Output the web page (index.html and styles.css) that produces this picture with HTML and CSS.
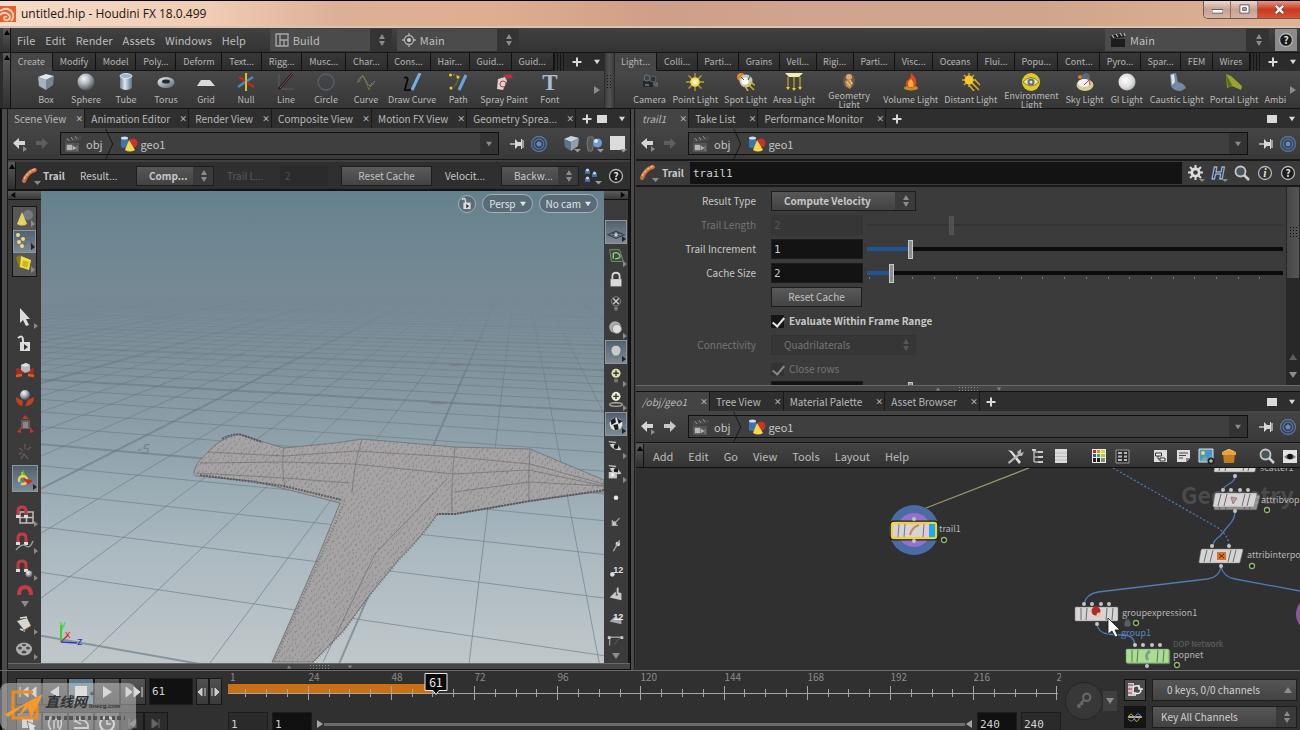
FILE: index.html
```html
<!DOCTYPE html>
<html lang="en">
  <head>
    <meta charset="UTF-8" />
    <meta name="viewport" content="width=device-width, initial-scale=1.0" />
    <title>untitled.hip - Houdini FX 18.0.499</title>
    <link rel="stylesheet" href="styles.css">
  </head>
  <body>
    <!-- icon sprite -->
    <svg class="sprite" aria-hidden="true">
      <defs>
        <linearGradient id="steel" x1="0" y1="0" x2="1" y2="1">
          <stop offset="0" stop-color="#eef3f6" /><stop offset="1" stop-color="#56646e" />
        </linearGradient>
        <linearGradient id="steelH"><stop offset="0" stop-color="#6f8496" /><stop offset=".4" stop-color="#dfe8ef" /><stop offset="1" stop-color="#5d6f7e" /></linearGradient>
        <radialGradient id="ball" cx=".38" cy=".3" r=".7">
          <stop offset="0" stop-color="#f4f6f8" /><stop offset=".5" stop-color="#a9b1b8" /><stop offset="1" stop-color="#4c5359" />
        </radialGradient>
        <radialGradient id="pearl" cx=".4" cy=".4" r=".65">
          <stop offset="0" stop-color="#ffffff" /><stop offset=".6" stop-color="#e3dde2" /><stop offset="1" stop-color="#a9b9a8" />
        </radialGradient>
        <radialGradient id="glow">
          <stop offset="0" stop-color="#fffde0" /><stop offset="1" stop-color="#e8d040" />
        </radialGradient>
      </defs>
      <symbol id="i-box" viewBox="0 0 18 18"><path d="M1 4l8-3 8 2-8 4z" fill="#dfe7ec" /><path d="M1 4l8 3v10l-7-4z" fill="#a5b3bd" /><path d="M9 7l8-4-1 9-7 5z" fill="#77858f" /></symbol>
      <symbol id="i-sphere" viewBox="0 0 18 18"><circle cx="9" cy="9" r="8.5" fill="url(#ball)" /></symbol>
      <symbol id="i-tube" viewBox="0 0 18 18"><path d="M3 3v12q6 4 12 0V3z" fill="url(#steelH)" /><ellipse cx="9" cy="3" rx="6" ry="2.4" fill="#9db2c3" stroke="#dbe5ec" /></symbol>
      <symbol id="i-torus" viewBox="0 0 18 18"><ellipse cx="9" cy="9.500" rx="8.500" ry="5.500" fill="url(#steel)" /><ellipse cx="9" cy="8.500" rx="4" ry="2" fill="#252b33" /></symbol>
      <symbol id="i-grid" viewBox="0 0 18 18"><path d="M4 7h9l5 6H0z" fill="#d7dbde" /></symbol>
      <symbol id="i-null" viewBox="0 0 18 18"><path d="M9 0v18" stroke="#d8c320" stroke-width="2" /><path d="M1 14l7-5" stroke="#4a86c4" stroke-width="2.500" /><path d="M2 4l6 4M11 10l6 4" stroke="#c02a22" stroke-width="2.500" /><path d="M10 8l6-4" stroke="#4a86c4" stroke-width="2.500" /></symbol>
      <symbol id="i-line" viewBox="0 0 18 18"><path d="M2 1v15h15" stroke="#5c5c5c" fill="none" /><path d="M2 16L15 1" stroke="#151515" stroke-width="2.500" /><path d="M3 15L15 1" stroke="#b05058" /></symbol>
      <symbol id="i-circle" viewBox="0 0 18 18"><circle cx="9" cy="9" r="8" fill="none" stroke="#56606e" stroke-width="1.300" /></symbol>
      <symbol id="i-curve" viewBox="0 0 18 18"><path d="M0 10Q5-2 9 8t9 0" stroke="#77808a" fill="none" /><path d="M2 9l4-7 6 15 3-8" stroke="#907a38" stroke-dasharray="2 1" fill="none" /></symbol>
      <symbol id="i-draw" viewBox="0 0 18 18"><path d="M1 5q5-2 3 4t-2 8q3 1 6-1" stroke="#080808" stroke-width="1.800" fill="none" /><path d="M17 0L9 17" stroke="#77aee6" stroke-width="3" /></symbol>
      <symbol id="i-path" viewBox="0 0 18 18"><path d="M1 2q9-1 8 4t-5 9" stroke="#a98e2d" fill="none" stroke-dasharray="2 1" /><path d="M17 2L10 17" stroke="#6ca2dc" stroke-width="3" /><g fill="#e4d12c"><circle cx="1.500" cy="2" r="1.500" /><circle cx="9" cy="4" r="1.500" /><circle cx="2" cy="15" r="1.500" /></g></symbol>
      <symbol id="i-spray" viewBox="0 0 18 18"><path d="M3 6l7-2 2 4-4 9-6-1z" fill="#d9d5d2" /><path d="M8 2l8-1 2 4-6 1z" fill="#b8323a" /><circle cx="8" cy="11" r="3" fill="none" stroke="#bd3a3f" /></symbol>
      <symbol id="i-font" viewBox="0 0 18 18"><text x="9" y="17" text-anchor="middle" font-family="Liberation Serif, serif" font-weight="bold" font-size="23" fill="#a9bdd0">T</text></symbol>
      <symbol id="i-camera" viewBox="0 0 18 18"><path d="M2 8h10v6H2z" fill="#23282d" /><circle cx="6" cy="5" r="3" fill="#3b4349" stroke="#6b757d" /><circle cx="12" cy="6" r="3" fill="#2b3238" stroke="#59636b" /><path d="M12 10l5-1v5l-4-1z" fill="#5a656d" /><path d="M4 12h4" stroke="#9ba6ae" /></symbol>
      <symbol id="i-point" viewBox="0 0 18 18"><path d="M9 0v18M0 9h18M2.500 2.500l13 13M15.500 2.500l-13 13" stroke="#b9a423" stroke-width="1.300" /><circle cx="9" cy="9" r="4.800" fill="url(#glow)" /></symbol>
      <symbol id="i-spot" viewBox="0 0 18 18"><circle cx="4" cy="4" r="4" fill="#d98a2b" /><circle cx="9" cy="8" r="6.500" fill="#c9c9c4" /><circle cx="8" cy="8" r="3.500" fill="#fff" /><path d="M11 11l6 6M13 9l5 3M8 13l3 5" stroke="#c9b526" stroke-width="1.500" /><path d="M4 4l3 3M13 3l-2 4" stroke="#444" /></symbol>
      <symbol id="i-area" viewBox="0 0 18 18"><path d="M0 0h18l-4 4H4z" fill="#f3edb4" /><path d="M3 4v12M9 4v13M15 4v12" stroke="#b9a423" stroke-width="1.300" /><path d="M1 14h4l-2 3zM7 15h4l-2 3zM13 14h4l-2 3z" fill="#e3cf33" /></symbol>
      <symbol id="i-geolight" viewBox="0 0 18 18"><ellipse cx="9" cy="8" rx="6" ry="7.500" fill="#6a5a52" /><circle cx="9" cy="4" r="3" fill="#e0a468" /><path d="M5 8l5-2 3 4-3 6-4-3z" fill="#c9903a" /><path d="M7 9l3 4M10 7l2 4" stroke="#d9d5ec" /></symbol>
      <symbol id="i-fire" viewBox="0 0 18 18"><ellipse cx="9" cy="15" rx="7" ry="2.500" fill="#c78a28" /><path d="M9 0q7 6 5 12-2 3-5 3t-5-3Q3 8 7 6q2-2 2-6z" fill="#dc4a1c" /><path d="M9 6q4 4 2 8H7q-3-4 2-8z" fill="#f8b03a" /></symbol>
      <symbol id="i-distant" viewBox="0 0 18 18"><path d="M7 0v14M0 7h14M2 2l10 10M12 2L2 12" stroke="#e0a01c" stroke-width="1.500" /><circle cx="7" cy="7" r="4.500" fill="#f6c92a" /><path d="M10 10l7 7M13 7l5 5M7 12l5 6" stroke="#d8b11e" stroke-width="1.500" /></symbol>
      <symbol id="i-env" viewBox="0 0 18 18"><circle cx="9" cy="9" r="9" fill="#e2c928" /><path d="M1 9q8-9 16 0-8 8-16 0z" fill="#eee8a0" stroke="#8f7d18" /><circle cx="9" cy="9" r="3.500" fill="#5d6f7e" /><circle cx="9" cy="9" r="1.500" fill="#dfe5ea" /></symbol>
      <symbol id="i-sky" viewBox="0 0 18 18"><circle cx="4" cy="4" r="2" fill="#e07d28" /><circle cx="10" cy="4" r="4" fill="#58677a" /><ellipse cx="9" cy="12" rx="8.500" ry="6" fill="#d7cc94" /><ellipse cx="8" cy="10" rx="6" ry="4" fill="#eef0f2" /><path d="M8 12l5-5 1 5" stroke="#b14a35" fill="none" /></symbol>
      <symbol id="i-gi" viewBox="0 0 18 18"><circle cx="9" cy="9" r="8.500" fill="url(#pearl)" /></symbol>
      <symbol id="i-caustic" viewBox="0 0 18 18"><path d="M2 1l6-1 2 9q6 1 8 6l-5 3q-8 0-10-5z" fill="#7389a5" /><path d="M3 2l3-1 1 8-3 3z" fill="#dde6ef" /></symbol>
      <symbol id="i-portal" viewBox="0 0 18 18"><path d="M1 1l5 2 11 10-1 4-9-4-5 2z" fill="#98a42b" /><path d="M1 1l2 14 4-3z" fill="#5d6a20" /></symbol>

      <symbol id="i-back" viewBox="0 0 18 18"><path d="M2 8l6-5v3h6v4H8v4z" fill="#d5d5d5" /><path d="M12 11v6l4-3z" fill="#8a8a8a" /></symbol>
      <symbol id="i-next" viewBox="0 0 18 18"><path d="M15 8L9 3v3H3v4h6v4z" fill="currentColor" /></symbol>
      <symbol id="i-obj" viewBox="0 0 18 18"><path d="M0 4l16-3v4L0 8z" fill="#4a4a4a" /><path d="M2 3l2 3M6 2l2 3M10 1l2 3" stroke="#8f8f8f" /><path d="M0 8h14v9H0z" fill="#555" /><path d="M2 10h5v5H2zM8 11l3 2-3 2zM12 11v5" fill="#b5b5b5" stroke="#b5b5b5" stroke-width=".5" /></symbol>
      <symbol id="i-geo" viewBox="0 0 18 18"><path d="M1 3v9q3 2 7 0V3z" fill="#3e74ad" /><ellipse cx="4.500" cy="3" rx="3.500" ry="1.500" fill="#cfe0ee" /><circle cx="13" cy="8" r="4.500" fill="#c8322a" /><path d="M9 5l6 10q-5 3-10 0z" fill="#f1da45" /></symbol>
      <symbol id="i-pin" viewBox="0 0 18 18"><path d="M2 9h6" stroke="#ddd" stroke-width="1.300" /><path d="M7 4l3 3h3V4h1v10h-1v-3h-3l-3 3z" fill="#d8d8d8" /><path d="M15 5v8" stroke="#bbb" stroke-width="1.500" /></symbol>
      <symbol id="i-target" viewBox="0 0 18 18"><g fill="none" stroke="#5275a8" stroke-width="1.300"><circle cx="9" cy="9" r="7.500" /><circle cx="9" cy="9" r="4.800" /></g><circle cx="9" cy="9" r="2.500" fill="#5b8bd0" /></symbol>
      <symbol id="i-cube" viewBox="0 0 18 18"><path d="M1 4l7-3 8 2-8 4z" fill="#c8d4de" /><path d="M1 4l7 3v9l-6-4z" fill="#60738a" /><path d="M8 7l8-4-1 8-7 5z" fill="#8fa0af" /><path d="M11 14h7l-3.500 3.500z" fill="#9a9a9a" /></symbol>
      <symbol id="i-bulbs" viewBox="0 0 18 18"><path d="M2 2h5l1 6-2 8H2L1 8z" fill="#555" stroke="#777" /><circle cx="11.500" cy="8" r="4.500" fill="#6d9bd1" /><circle cx="10" cy="6" r="2" fill="#dbe8f5" /><path d="M11 14h7l-3.500 3.500z" fill="#9a9a9a" /></symbol>
      <symbol id="i-swatch" viewBox="0 0 18 18"><path d="M1 1h15v14H1z" fill="#dcdcdc" /><path d="M11 14h7l-3.500 3.500z" fill="#9a9a9a" /></symbol>
      <symbol id="i-trail" viewBox="0 0 20 20"><path d="M3 15Q6 6 14 4" stroke="#c9713a" stroke-width="4" fill="none" stroke-linecap="round" /><path d="M3 13Q7 6 14 3" stroke="#eeb88c" stroke-width="1.500" fill="none" stroke-dasharray="3 1" /><path d="M13 15h7l-3.500 4z" fill="#8a8a8a" /></symbol>
      <symbol id="i-updown" viewBox="0 0 8 14"><path d="M1 6l3-5 3 5zM1 8h6l-3 5z" fill="currentColor" /></symbol>
      <symbol id="i-down" viewBox="0 0 8 8"><path d="M0 1h8L4 7z" fill="currentColor" /></symbol>
      <symbol id="i-up" viewBox="0 0 8 8"><path d="M0 7h8L4 1z" fill="currentColor" /></symbol>
      <symbol id="i-right" viewBox="0 0 8 8"><path d="M1 0v8l6-4z" fill="currentColor" /></symbol>
      <symbol id="i-left" viewBox="0 0 8 8"><path d="M7 0v8L1 4z" fill="currentColor" /></symbol>
      <symbol id="i-plus" viewBox="0 0 10 10"><path d="M5 0.500v9M0.500 5h9" stroke="#d8d8d8" stroke-width="2" /></symbol>
      <symbol id="i-pane" viewBox="0 0 10 8"><path d="M0 0h10v8H0z" fill="#dadada" /></symbol>
      <symbol id="i-help" viewBox="0 0 18 18"><circle cx="9" cy="9" r="6.500" fill="#1b1b1b" stroke="#b5b5b5" stroke-width="1.300" /><text x="9" y="13" text-anchor="middle" font-family="Noto Sans CJK SC, sans-serif" font-weight="bold" font-size="10" fill="#e0e0e0">?</text></symbol>
      <symbol id="i-info" viewBox="0 0 18 18"><circle cx="9" cy="9" r="6.500" fill="#333" stroke="#b5b5b5" stroke-width="1.300" /><text x="9" y="13" text-anchor="middle" font-family="Liberation Serif, serif" font-weight="bold" font-style="italic" font-size="12" fill="#dcdcdc">i</text></symbol>
      <symbol id="i-gear" viewBox="0 0 18 18"><path d="M8.500 1v15M1 8.500h15M3 3l11 11M14 3L3 14" stroke="#dcdcdc" stroke-width="2" /><circle cx="8.500" cy="8.500" r="5" fill="#dcdcdc" /><circle cx="8.500" cy="8.500" r="2.300" fill="#3a3a3a" /><path d="M12 15h6l-3 3z" fill="#8a8a8a" /></symbol>
      <symbol id="i-hda" viewBox="0 0 18 18"><text x="8" y="15" text-anchor="middle" font-family="Liberation Sans, sans-serif" font-weight="bold" font-style="italic" font-size="17" fill="#132638" stroke="#b9cfe4">H</text><path d="M12 15h6l-3 3z" fill="#8a8a8a" /></symbol>
      <symbol id="i-search" viewBox="0 0 18 18"><circle cx="7.500" cy="7.500" r="5" fill="#49575c" stroke="#c6c6c6" stroke-width="1.800" /><path d="M11 11l5 5" stroke="#d0d0d0" stroke-width="2.500" /></symbol>
      <symbol id="i-people" viewBox="0 0 18 18"><g fill="#3f6ea8"><path d="M1 3h5v4H1zM8 6h5v4H8zM1 11h5v4H1z" /></g><g fill="#d6d6d6"><circle cx="3.500" cy="3" r="1.500" /><circle cx="10.500" cy="6" r="1.500" /><circle cx="3.500" cy="11" r="1.500" /></g><path d="M11 14h7l-3.500 3.500z" fill="#9a9a9a" /></symbol>
      <symbol id="i-layout" viewBox="0 0 14 14"><path d="M1 1h12v12H1zM5 1v12M5 7h8M9 7v6" fill="none" stroke="#a8a8a8" stroke-width="1.300" /></symbol>
      <symbol id="i-radial" viewBox="0 0 14 14"><circle cx="7" cy="7" r="4.500" fill="none" stroke="#b0b0b0" stroke-width="1.300" /><circle cx="7" cy="7" r="2" fill="#ccc" /><path d="M7 0v3M7 11v3M0 7h3M11 7h3" stroke="#b0b0b0" stroke-width="1.300" /></symbol>
      <symbol id="i-clap" viewBox="0 0 16 16"><path d="M1 7h14v8H1z" fill="#1d1d1d" /><path d="M0 4l15-3v4L1 7z" fill="#222" /><path d="M2 3l2 3M6 2l2 3M10 1l2 3M14 1l1 3" stroke="#b5b5b5" stroke-width="1.300" /></symbol>

      <symbol id="i-tools" viewBox="0 0 18 18"><path d="M2 3l4 1 9 11-2 2L5 6z" fill="#ddd" /><path d="M15 2l-4 3 1 2-10 8 1 2 10-8h3l2-4-3 1z" fill="#b5b5b5" /></symbol>
      <symbol id="i-tree" viewBox="0 0 18 18"><path d="M5 2v13M5 5h7M5 10h7M5 15h7" stroke="#b0b0b0" stroke-width="1.500" /><path d="M3 2h4v2H3zM9 4h5v2H9zM9 9h5v2H9zM9 14h5v2H9z" fill="#ccc" /></symbol>
      <symbol id="i-list" viewBox="0 0 18 18"><path d="M3 2h12v14H3z" fill="#dcdcdc" /><path d="M3 6h12M3 9.500h12M3 13h12" stroke="#bbb" /></symbol>
      <symbol id="i-palette" viewBox="0 0 18 18"><path d="M2 2h14v14H2z" fill="#ececec" /><path d="M3 3h3v3H3z" fill="#d02020" /><path d="M7 3h3v3H7z" fill="#e08a20" /><path d="M11 3h4v3h-4z" fill="#e8d620" /><path d="M3 7h3v3H3z" fill="#305aa8" /><path d="M7 7h3v3H7z" fill="#4ca840" /><path d="M11 7h4v3h-4z" fill="#a8c848" /><path d="M3 11h3v4H3zM7 11h3v4H7z" fill="#222" /><path d="M11 11h4v4h-4z" fill="#8a8a8a" /></symbol>
      <symbol id="i-cells" viewBox="0 0 18 18"><path d="M3 3h13v13H3z" fill="#2a2a2a" stroke="#9a9a9a" /><path d="M5 6h4M11 6h3M5 9.500h4M11 9.500h3M5 13h4M11 13h3" stroke="#b8b8b8" stroke-width="1.800" /></symbol>
      <symbol id="i-netbox" viewBox="0 0 18 18"><path d="M3 3h13v12H3z" fill="#dedede" /><path d="M4.500 6h6v3h-6zM9 11h5v3H9zM7 9v3h2" fill="#eee" stroke="#333" /></symbol>
      <symbol id="i-note" viewBox="0 0 18 18"><path d="M3 3h13v8l-4 4H3z" fill="#dedede" /><path d="M5 6h9M5 8.500h7M5 11h4" stroke="#444" /><path d="M12 15v-4h4z" fill="#8b8b8b" /></symbol>
      <symbol id="i-image" viewBox="0 0 18 18"><path d="M2 2h14v13H2z" fill="#4c92cc" stroke="#dce6ee" /><circle cx="6" cy="6" r="2" fill="#ecdf4a" /><path d="M3 14l5-5 3 3 3-4 2 6z" fill="#6fae9b" /><circle cx="14" cy="14" r="3.500" fill="#222" /><path d="M14 12v4M12 14h4" stroke="#ddd" /></symbol>
      <symbol id="i-gift" viewBox="0 0 18 18"><path d="M3 7h12l-1 9H4z" fill="#c07c22" /><path d="M2 5q7-5 14 0v3H2z" fill="#e8a03c" /><path d="M5 5q4-5 8 0" stroke="#f3c57a" fill="none" /></symbol>
      <symbol id="i-eye" viewBox="0 0 18 18"><path d="M2 3h14v13H2z" fill="#e2e2e2" /><path d="M3 10q6-6 12 0-6 5-12 0z" fill="#777" /><circle cx="9" cy="9.500" r="2.800" fill="#111" /></symbol>

      <symbol id="i-cone" viewBox="0 0 22 22"><circle cx="14" cy="7" r="5" fill="#747a7d" /><path d="M8 4l5 12q-5 3-10 0z" fill="#e3d660" /><path d="M17 12v7l4-3z" fill="#8b8b8b" /></symbol>
      <symbol id="i-points" viewBox="0 0 22 22"><path d="M4 4l8 2 5-2M5 11l4-2 8-1v7M8 15l5-3" stroke="#5c6670" fill="none" /><g fill="#ecd988"><circle cx="4" cy="4" r="2" /><circle cx="9" cy="8" r="2" /><circle cx="5" cy="11" r="2" /><circle cx="8" cy="15" r="2" /></g><path d="M17 12v7l4-3z" fill="#222" /></symbol>
      <symbol id="i-yellowbox" viewBox="0 0 22 22"><path d="M2 3l5-2 3 12-5 1z" fill="#8a7a1a" /><path d="M7 2l10 4-2 10-9-3z" fill="#f0e04e" /><path d="M9 6l6 2-2 6-5-2z" fill="#cdb913" /><path d="M17 12v7l4-3z" fill="#8b8b8b" /></symbol>
      <symbol id="i-arrow" viewBox="0 0 22 22"><path d="M6 2v15l3-3 3 6 3-1-3-6h4z" fill="#dcdcdc" /></symbol>
      <symbol id="i-unlock" viewBox="0 0 22 22"><path d="M4 5q5-4 5 3v2" stroke="#dcdcdc" stroke-width="2" fill="none" /><path d="M6 9h10v9H6z" fill="#dcdcdc" /><path d="M10 11v6l4-3z" fill="#333" /></symbol>
      <symbol id="i-move" viewBox="0 0 22 22"><path d="M2 8l7 1 1 3-7 6zM20 8l-7 1-1 3 7 6z" fill="#a52d1f" /><path d="M2 16l6-1M20 16l-6-1" stroke="#e0582c" stroke-width="2.500" /><path d="M7 5l5-2 4 2v6l-5 2-4-3z" fill="#b4bac0" /><path d="M7 5l5-2 4 2-5 2z" fill="#dde0e3" /></symbol>
      <symbol id="i-rotate" viewBox="0 0 22 22"><path d="M2 10q0 8 6 9l1-5zM20 10q0 9-9 9l3-6z" fill="#c8401f" /><circle cx="11" cy="8" r="5" fill="url(#ball)" /></symbol>
      <symbol id="i-scale" viewBox="0 0 22 22"><path d="M8 5l3-4 4 4zM3 18l4-5v6zM20 18l-4-5v6z" fill="#c8321f" /><path d="M7 6h9v9H7z" fill="#625c60" /><path d="M9 8h5v6H9z" fill="#8f8488" /></symbol>
      <symbol id="i-pose" viewBox="0 0 22 22"><path d="M11 3v5M5 7l4 3M17 6l-4 3M7 18l3-5 4 5M5 13l3-1" stroke="#665656" stroke-width="1.500" fill="none" /></symbol>
      <symbol id="i-gizmo" viewBox="0 0 22 22"><path d="M6 9l3-7 4 8z" fill="#6ab52c" /><path d="M8 4v6" stroke="#7ed03a" stroke-width="2" /><circle cx="9" cy="12" r="4" fill="none" stroke="#e6d64a" stroke-width="2.500" /><path d="M3 18l4-4" stroke="#4a8ad0" stroke-width="2.500" /><path d="M10 11l8 2-4 3z" fill="#d02a20" stroke="#d02a20" /></symbol>
      <symbol id="i-magnet" viewBox="0 0 22 22"><path d="M4 12V7q0-4 4-4t4 4v5" stroke="#c23c44" stroke-width="3" fill="none" /><path d="M2 11h4v3H2zM10 11h4v3h-4z" fill="#ddd" /></symbol>
      <symbol id="i-magnet-grid" viewBox="0 0 22 22"><path d="M6 8h13v11H6zM12.500 8v11M6 13.500h13" stroke="#bdbdbd" stroke-width="1.500" fill="none" /><use href="#i-magnet" /></symbol>
      <symbol id="i-magnet-curve" viewBox="0 0 22 22"><use href="#i-magnet" /><path d="M2 19q6-7 10-4t7-5" stroke="#9a9a9a" stroke-width="1.500" fill="none" /></symbol>
      <symbol id="i-magnet-point" viewBox="0 0 22 22"><use href="#i-magnet" /><circle cx="15" cy="16" r="3.500" fill="url(#ball)" /></symbol>
      <symbol id="i-magnet-half" viewBox="0 0 22 12"><path d="M5 12q0-8 6-8t6 8" stroke="#c23c44" stroke-width="4" fill="none" /></symbol>
      <symbol id="i-note2" viewBox="0 0 22 22"><path d="M3 8l10-3 4 8-7 4z" fill="#d8d4cf" /><path d="M6 5l7-1M6 16l5 2" stroke="#ddd" stroke-width="1.500" /><path d="M9 18l8-5" stroke="#a0522d" /></symbol>
      <symbol id="i-reel" viewBox="0 0 22 22"><ellipse cx="10" cy="11" rx="8" ry="6.500" fill="#b0b0b0" /><g fill="#4c4c4c"><ellipse cx="6" cy="10" rx="2" ry="1.500" /><ellipse cx="10" cy="7" rx="2" ry="1.300" /><ellipse cx="14" cy="10" rx="2" ry="1.500" /><ellipse cx="10" cy="14" rx="2.500" ry="1.500" /></g></symbol>

      <symbol id="i-plane" viewBox="0 0 22 22"><path d="M2 14l9-4 9 4-9 4zM6 16l9-4M7 12l9 4" stroke="#34444f" fill="none" stroke-width="1.300" /><circle cx="11" cy="14" r="2" fill="#c0cbd4" /></symbol>
      <symbol id="i-greengrid" viewBox="0 0 22 22"><path d="M4 4h11l4 13H6z" fill="#3b4a3b" stroke="#6f9a66" /><path d="M8 8q5-2 7 2t-5 4M8 8v6" stroke="#9cc88e" fill="none" stroke-width="1.500" /></symbol>
      <symbol id="i-lock" viewBox="0 0 22 22"><path d="M7 10V7q0-4 4-4t4 4v3" stroke="#d4d4d4" stroke-width="2" fill="none" /><path d="M5 10h12v8H5z" fill="#d9d9d9" /></symbol>
      <symbol id="i-bulb-x" viewBox="0 0 22 22"><circle cx="11" cy="8" r="5" fill="#3a3a3a" stroke="#8a8a8a" /><path d="M8 5l6 6M14 5l-6 6" stroke="#ccc" stroke-width="1.500" /><path d="M9 14h4v4H9z" fill="#777" /></symbol>
      <symbol id="i-balls" viewBox="0 0 22 22"><circle cx="10" cy="10" r="6.500" fill="#adadad" /><circle cx="12" cy="12" r="5" fill="#dcdcdc" stroke="#888" /></symbol>
      <symbol id="i-bulb" viewBox="0 0 22 22"><path d="M11 4q5 0 5 5 0 3-3 6H9Q6 12 6 9q0-5 5-5z" fill="#c6ccc8" /><path d="M9 15h4v3H9z" fill="#777" /></symbol>
      <symbol id="i-bulb-plus" viewBox="0 0 22 22"><circle cx="11" cy="8" r="5" fill="#dde0a8" /><path d="M11 5v6M8 8h6" stroke="#333" stroke-width="1.500" /><path d="M9 14h4v4H9z" fill="#777" /></symbol>
      <symbol id="i-bulb-base" viewBox="0 0 22 22"><circle cx="11" cy="7" r="5" fill="#e9ebd5" /><path d="M11 4v6M8 7h6" stroke="#333" stroke-width="1.500" /><ellipse cx="11" cy="16" rx="7" ry="2" fill="none" stroke="#aaa" stroke-width="1.500" /></symbol>
      <symbol id="i-checker" viewBox="0 0 22 22"><circle cx="11" cy="11" r="7" fill="#e2e2e2" /><path d="M5 7l5-3 1 5-5 3zM12 4l6 4-4 3zM8 12l5-1 1 6-4 1z" fill="#1d1d1d" /></symbol>
      <symbol id="i-glance" viewBox="0 0 22 22"><path d="M4 7q8-3 13 6-9 2-13-6z" fill="#cfcfcf" /><circle cx="11" cy="9.500" r="2.500" fill="#1a1a1a" /><path d="M3 4l8 1" stroke="#bbb" stroke-width="1.500" /></symbol>
      <symbol id="i-glance-lock" viewBox="0 0 22 22"><use href="#i-glance" /><path d="M3 11h9v7H3z" fill="#c9c9c9" /><circle cx="7" cy="14" r="2" fill="#eee" /></symbol>
      <symbol id="i-dot" viewBox="0 0 22 22"><circle cx="11" cy="13" r="2.500" fill="#e6e6e6" /></symbol>
      <symbol id="i-dot-arrow" viewBox="0 0 22 22"><circle cx="9" cy="15" r="2.500" fill="#ccc" /><path d="M9 15l6-6M7 11v6h6" stroke="#aaa" fill="none" stroke-width="1.300" /></symbol>
      <symbol id="i-dot-vec" viewBox="0 0 22 22"><circle cx="13" cy="11" r="2.500" fill="#ddd" /><path d="M8 19l7-12" stroke="#aaa" stroke-width="1.500" /></symbol>
      <symbol id="i-dot-num" viewBox="0 0 22 22"><circle cx="7" cy="18" r="2.500" fill="#ddd" /><text x="8" y="16" font-family="Liberation Sans, sans-serif" font-weight="bold" font-size="10" fill="#ddd">12</text></symbol>
      <symbol id="i-prim" viewBox="0 0 22 22"><path d="M4 17l6-6 7 1v8z" fill="#c9c9c9" /><path d="M12 7v8" stroke="#666" stroke-width="2.500" /><path d="M13 6v7" stroke="#ddd" stroke-width="1.500" /></symbol>
      <symbol id="i-prim-num" viewBox="0 0 22 22"><path d="M4 17l5-5 8 2v6z" fill="#a9a9a9" /><text x="8" y="15" font-family="Liberation Sans, sans-serif" font-weight="bold" font-size="10" fill="#eee">12</text></symbol>
      <symbol id="i-hull" viewBox="0 0 22 22"><path d="M4 17V8h13" stroke="#999" fill="none" stroke-width="1.500" /><path d="M9 16l6-7" stroke="#666" /><path d="M2 7h3v3H2zM16 7h3v3h-3z" fill="#ccc" /></symbol>
      <!-- a network node body: tilted plate with flag stripes -->
      <symbol id="n-plate" viewBox="0 0 46 16"><path d="M4 1h40q1 0 1 1l-3 12q0 1-1 1H2q-1 0-1-1L3 2z" fill="currentColor" stroke="#7b7b7b" stroke-width=".5" /><path d="M9 2L6 14M15 2l-3 12M33 2l-3 12M38 2l-3 12" stroke="#6b6b6b" /></symbol>
      <symbol id="n-box" viewBox="0 0 46 16"><path d="M2 1h41q1 0 1 1v12q0 1-1 1H2q-1 0-1-1V2q0-1 1-1z" fill="currentColor" stroke="#7b7b7b" stroke-width=".5" /><path d="M7 2v12M13 2l-1 12M33 2l-1 12M39 2l-1 12" stroke="#6b6b6b" /></symbol>
    </svg>

    <header class="titlebar">
      <svg class="app-logo" viewBox="0 0 16 16"><path d="M0 0h16v16H0z" fill="#e8602c" /><path d="M0 5q7-5 12 1 3 5-1 9M0 9q4-4 8-1t0 6q-4 1-4-2 0-2 3-1" stroke="#fbd9c4" stroke-width="1.800" fill="none" /></svg>
      <span class="title">untitled.hip - Houdini FX 18.0.499</span>
      <div class="window-buttons">
        <button type="button" aria-label="Minimize"><svg viewBox="0 0 12 12"><path d="M0 6h12v4H0z" fill="#fff" stroke="#555" /></svg></button>
        <button type="button" aria-label="Maximize"><svg viewBox="0 0 12 12"><path d="M1 1h10v9H1z" fill="#fff" stroke="#555" /><path d="M4 4h4v3H4z" fill="#caa" stroke="#555" /></svg></button>
        <button type="button" class="close" aria-label="Close"><svg viewBox="0 0 12 12"><path d="M2 2l8 8M10 2l-8 8" stroke="#733" stroke-width="4" /><path d="M2 2l8 8M10 2l-8 8" stroke="#fff" stroke-width="2.500" /></svg></button>
      </div>
    </header>

    <nav class="menubar">
      <span class="handle"></span>
      <div class="menus">
        <button type="button">File</button>
        <button type="button">Edit</button>
        <button type="button">Render</button>
        <button type="button">Assets</button>
        <button type="button">Windows</button>
        <button type="button">Help</button>
      </div>
      <div class="desk">
        <svg class="icon-14"><use href="#i-layout" /></svg>
        <select aria-label="Desktop"><option>Build</option></select>
        <svg class="updown"><use href="#i-updown" /></svg>
      </div>
      <div class="desk">
        <svg class="icon-14"><use href="#i-radial" /></svg>
        <select aria-label="Radial menu"><option>Main</option></select>
        <svg class="updown"><use href="#i-updown" /></svg>
      </div>
      <div class="desk desk-take">
        <svg class="icon-16"><use href="#i-clap" /></svg>
        <select aria-label="Take"><option>Main</option></select>
        <svg class="updown"><use href="#i-updown" /></svg>
      </div>
      <button type="button" class="help-button" aria-label="Help"><svg class="icon"><use href="#i-help" /></svg></button>
    </nav>

    <section class="shelves">
      <span class="handle"></span>
      <div class="shelf shelf-left">
        <div class="shelf-tabs">
          <button type="button" class="active">Create</button>
          <button type="button">Modify</button>
          <button type="button">Model</button>
          <button type="button">Poly...</button>
          <button type="button">Deform</button>
          <button type="button">Text...</button>
          <button type="button">Rigg...</button>
          <button type="button">Musc...</button>
          <button type="button">Char...</button>
          <button type="button">Cons...</button>
          <button type="button">Hair...</button>
          <button type="button">Guid...</button>
          <button type="button">Guid...</button>
          <div class="shelf-end">
            <svg class="icon-10"><use href="#i-plus" /></svg>
            <svg class="icon-6"><use href="#i-down" /></svg>
          </div>
        </div>
        <div class="tools">
          <button type="button"><svg class="icon"><use href="#i-box" /></svg><span>Box</span></button>
          <button type="button"><svg class="icon"><use href="#i-sphere" /></svg><span>Sphere</span></button>
          <button type="button"><svg class="icon"><use href="#i-tube" /></svg><span>Tube</span></button>
          <button type="button"><svg class="icon"><use href="#i-torus" /></svg><span>Torus</span></button>
          <button type="button"><svg class="icon"><use href="#i-grid" /></svg><span>Grid</span></button>
          <button type="button"><svg class="icon"><use href="#i-null" /></svg><span>Null</span></button>
          <button type="button"><svg class="icon"><use href="#i-line" /></svg><span>Line</span></button>
          <button type="button"><svg class="icon"><use href="#i-circle" /></svg><span>Circle</span></button>
          <button type="button"><svg class="icon"><use href="#i-curve" /></svg><span>Curve</span></button>
          <button type="button"><svg class="icon"><use href="#i-draw" /></svg><span>Draw Curve</span></button>
          <button type="button"><svg class="icon"><use href="#i-path" /></svg><span>Path</span></button>
          <button type="button"><svg class="icon"><use href="#i-spray" /></svg><span>Spray Paint</span></button>
          <button type="button"><svg class="icon"><use href="#i-font" /></svg><span>Font</span></button>
          <svg class="more icon-8"><use href="#i-right" /></svg>
        </div>
      </div>
      <span class="shelf-divider"></span>
      <div class="shelf shelf-right">
        <div class="shelf-tabs">
          <button type="button" class="active">Light...</button>
          <button type="button">Colli...</button>
          <button type="button">Parti...</button>
          <button type="button">Grains</button>
          <button type="button">Vell...</button>
          <button type="button">Rigi...</button>
          <button type="button">Parti...</button>
          <button type="button">Visc...</button>
          <button type="button">Oceans</button>
          <button type="button">Flui...</button>
          <button type="button">Popu...</button>
          <button type="button">Cont...</button>
          <button type="button">Pyro...</button>
          <button type="button">Spar...</button>
          <button type="button">FEM</button>
          <button type="button">Wires</button>
          <div class="shelf-end">
            <svg class="icon-10"><use href="#i-plus" /></svg>
            <svg class="icon-6"><use href="#i-down" /></svg>
          </div>
        </div>
        <div class="tools">
          <button type="button"><svg class="icon"><use href="#i-camera" /></svg><span>Camera</span></button>
          <button type="button"><svg class="icon"><use href="#i-point" /></svg><span>Point Light</span></button>
          <button type="button"><svg class="icon"><use href="#i-spot" /></svg><span>Spot Light</span></button>
          <button type="button"><svg class="icon"><use href="#i-area" /></svg><span>Area Light</span></button>
          <button type="button" class="wide"><svg class="icon"><use href="#i-geolight" /></svg><span>Geometry<br>Light</span></button>
          <button type="button"><svg class="icon"><use href="#i-fire" /></svg><span>Volume Light</span></button>
          <button type="button"><svg class="icon"><use href="#i-distant" /></svg><span>Distant Light</span></button>
          <button type="button" class="wide"><svg class="icon"><use href="#i-env" /></svg><span>Environment<br>Light</span></button>
          <button type="button"><svg class="icon"><use href="#i-sky" /></svg><span>Sky Light</span></button>
          <button type="button"><svg class="icon"><use href="#i-gi" /></svg><span>GI Light</span></button>
          <button type="button"><svg class="icon"><use href="#i-caustic" /></svg><span>Caustic Light</span></button>
          <button type="button"><svg class="icon"><use href="#i-portal" /></svg><span>Portal Light</span></button>
          <button type="button" class="clipped"><svg class="icon"></svg><span>Ambi</span></button>
          <svg class="more icon-8"><use href="#i-right" /></svg>
        </div>
      </div>
    </section>

    <main class="workspace">
      <div class="gutter"></div>

      <section class="pane pane-left">
        <div class="pane-tabs">
          <button type="button" class="active">Scene View <i>×</i></button>
          <button type="button">Animation Editor <i>×</i></button>
          <button type="button">Render View <i>×</i></button>
          <button type="button">Composite View <i>×</i></button>
          <button type="button">Motion FX View <i>×</i></button>
          <button type="button">Geometry Sprea... <i>×</i></button>
          <svg class="tab-add icon-10"><use href="#i-plus" /></svg>
          <span class="tab-tools">
            <svg class="icon-pane"><use href="#i-pane" /></svg>
            <svg class="icon-6"><use href="#i-down" /></svg>
          </span>
        </div>
        <div class="pathbar">
          <svg class="icon"><use href="#i-back" /></svg>
          <svg class="icon dim"><use href="#i-next" /></svg>
          <div class="crumbs">
            <a href="#obj"><svg class="icon"><use href="#i-obj" /></svg>obj</a>
            <a href="#geo1"><svg class="icon"><use href="#i-geo" /></svg>geo1</a>
            <span class="crumb-menu"><svg class="icon-6"><use href="#i-down" /></svg></span>
          </div>
          <svg class="icon"><use href="#i-pin" /></svg>
          <svg class="icon"><use href="#i-target" /></svg>
          <span class="path-extra">
            <svg class="icon"><use href="#i-cube" /></svg>
            <svg class="icon"><use href="#i-bulbs" /></svg>
            <svg class="icon"><use href="#i-swatch" /></svg>
          </span>
        </div>
        <div class="opbar">
          <span class="handle"></span>
          <svg class="icon-20"><use href="#i-trail" /></svg>
          <b>Trail</b>
          <label for="op-result">Result...</label>
          <div class="select select-op">
            <select id="op-result" class="bold"><option>Comp...</option></select>
            <svg class="updown"><use href="#i-updown" /></svg>
          </div>
          <label for="op-length" class="disabled">Trail L...</label>
          <input id="op-length" class="op-input" type="text" value="2" disabled />
          <button type="button" class="button">Reset Cache</button>
          <label for="op-velocity">Velocit...</label>
          <div class="select select-op">
            <select id="op-velocity"><option>Backw...</option></select>
            <svg class="updown"><use href="#i-updown" /></svg>
          </div>
          <svg class="icon"><use href="#i-people" /></svg>
          <svg class="icon"><use href="#i-help" /></svg>
        </div>
        <div class="scene">
          <div class="toolbar toolbar-left">
            <span class="toolbar-handle"><svg class="icon-6"><use href="#i-left" /></svg></span>
            <div class="tool-group">
              <button type="button" aria-label="Objects"><svg><use href="#i-cone" /></svg></button>
              <button type="button" class="on" aria-label="Points"><svg><use href="#i-points" /></svg></button>
              <button type="button" aria-label="Primitives"><svg><use href="#i-yellowbox" /></svg></button>
            </div>
            <button type="button" class="menu" aria-label="Select"><svg><use href="#i-arrow" /></svg></button>
            <button type="button" aria-label="Secure selection"><svg><use href="#i-unlock" /></svg></button>
            <button type="button" aria-label="Move"><svg><use href="#i-move" /></svg></button>
            <button type="button" aria-label="Rotate"><svg><use href="#i-rotate" /></svg></button>
            <button type="button" aria-label="Scale"><svg><use href="#i-scale" /></svg></button>
            <button type="button" aria-label="Pose"><svg><use href="#i-pose" /></svg></button>
            <button type="button" class="on menu" aria-label="Handles"><svg><use href="#i-gizmo" /></svg></button>
            <div class="snap-group">
              <button type="button" class="menu" aria-label="Snap to grid"><svg><use href="#i-magnet-grid" /></svg></button>
              <button type="button" class="menu" aria-label="Snap to curve"><svg><use href="#i-magnet-curve" /></svg></button>
              <button type="button" class="menu" aria-label="Snap to point"><svg><use href="#i-magnet-point" /></svg></button>
              <button type="button" class="half" aria-label="Multi snap"><svg><use href="#i-magnet-half" /></svg></button>
              <svg class="scroll-down"><use href="#i-down" /></svg>
            </div>
            <button type="button" class="menu low" aria-label="Notes"><svg><use href="#i-note2" /></svg></button>
            <button type="button" class="menu low" aria-label="Flipbook"><svg><use href="#i-reel" /></svg></button>
          </div>
          <div class="viewport">
            <svg class="canvas">
              <defs>
                <linearGradient id="fade" gradientUnits="userSpaceOnUse" x1="0" y1="290" x2="0" y2="560">
                  <stop offset="0" stop-color="#60747f" stop-opacity="0" />
                  <stop offset=".35" stop-color="#5f737e" stop-opacity=".5" />
                  <stop offset="1" stop-color="#72858f" stop-opacity=".75" />
                </linearGradient>
                <pattern id="stipple" width="23" height="19" patternUnits="userSpaceOnUse" patternTransform="rotate(9)">
                  <path d="M1 1h1M6 0h1M11 2h1M16 1h1M21 3h1M3 5h1M9 4h1M14 6h1M19 5h1M0 8h1M6 9h1M12 8h1M17 10h1M22 9h1M3 12h1M9 13h1M15 12h1M20 14h1M1 16h1M6 17h1M12 16h1M17 17h1M4 3h1M10 11h1M18 8h1M13 14h1M21 17h1" stroke="#4c4c4f" opacity=".6" />
                </pattern>
              </defs>
              <g transform="translate(-41 -192)">
                <g id="floor" stroke="url(#fade)"></g>
                <text class="floor-label" x="136" y="455">-5</text>
                <g fill="#7b6f7e" opacity=".45"><ellipse cx="457" cy="366" rx="8" ry="1.500" /><ellipse cx="438" cy="404" rx="9" ry="1.500" /><ellipse cx="470" cy="341" rx="6" ry="1" /></g>
                <path class="mesh" d="M194 473q3-10 7-13l14-14q13-9 24-11l21 7 24 7 51-5 27-4 93 8 75 2 74 31v11l-74 10-75 13h-18q-14 21-38 45l-28 34-28 38-30 31h-41l19-43 29-67 20-49-39-10-47-12-58-5q-3-1-2-4z" />
                <path fill="url(#stipple)" d="M194 473q3-10 7-13l14-14q13-9 24-11l21 7 24 7 51-5 27-4 93 8 75 2 74 31v11l-74 10-75 13h-18q-14 21-38 45l-28 34-28 38-30 31h-41l19-43 29-67 20-49-39-10-47-12-58-5q-3-1-2-4z" />
                <path class="edges" d="M284 449q-3 18 1 40M362 440q-8 25-10 54M455 448q-4 35-3 67M530 450q-2 25-1 52M208 453l76 4 72-5 99 6 75 7 74 20M200 464l84-1 70 2 100 10 75-4 75 16M196 474l88 5 66 5M454 493l75-10 75 4M447 480l-72 75-52 108" />
                <path class="shade" d="M200 476l84 11 58 14M604 491l-74 11-75 13h-18M222 440q10-6 20-4l20 7" />
                <path class="shade soft" d="M345 502l-44 100-27 61M437 516q-14 21-38 45l-28 34-28 38-30 31" />
                <path d="M61 643V626" stroke="#35d435" stroke-width="2" />
                <path d="M61 643l7-7" stroke="#d83030" stroke-width="1.500" />
                <path d="M61 643l16 1" stroke="#3434c8" stroke-width="1.500" />
                <text class="axis" x="60" y="629" fill="#35d435">y</text>
                <text class="axis" x="65" y="639" fill="#d83030">x</text>
                <text class="axis" x="77" y="646" fill="#2b2bc4">z</text>
              </g>
            </svg>
            <div class="view-menus">
              <button type="button" class="round" aria-label="Lock camera"><svg class="icon-16"><use href="#i-unlock" /></svg></button>
              <button type="button">Persp <svg class="icon-6"><use href="#i-down" /></svg></button>
              <button type="button">No cam <svg class="icon-6"><use href="#i-down" /></svg></button>
            </div>
          </div>
          <div class="toolbar toolbar-right">
            <span class="toolbar-handle"><svg class="icon-6"><use href="#i-right" /></svg></span>
            <button type="button" class="on menu" aria-label="Reference plane"><svg><use href="#i-plane" /></svg></button>
            <button type="button" class="menu" aria-label="Construction plane"><svg><use href="#i-greengrid" /></svg></button>
            <button type="button" aria-label="Lock"><svg><use href="#i-lock" /></svg></button>
            <button type="button" aria-label="No lighting"><svg><use href="#i-bulb-x" /></svg></button>
            <button type="button" class="menu" aria-label="Headlight"><svg><use href="#i-balls" /></svg></button>
            <button type="button" class="on menu" aria-label="Normal lighting"><svg><use href="#i-bulb" /></svg></button>
            <button type="button" class="menu" aria-label="High quality lighting"><svg><use href="#i-bulb-plus" /></svg></button>
            <button type="button" class="menu" aria-label="Shadows"><svg><use href="#i-bulb-base" /></svg></button>
            <button type="button" class="on menu" aria-label="Materials"><svg><use href="#i-checker" /></svg></button>
            <button type="button" class="menu" aria-label="Visibility"><svg><use href="#i-glance" /></svg></button>
            <button type="button" class="menu" aria-label="Locked visibility"><svg><use href="#i-glance-lock" /></svg></button>
            <button type="button" aria-label="Display points"><svg><use href="#i-dot" /></svg></button>
            <button type="button" aria-label="Point normals"><svg><use href="#i-dot-arrow" /></svg></button>
            <button type="button" aria-label="Point trails"><svg><use href="#i-dot-vec" /></svg></button>
            <button type="button" aria-label="Point numbers"><svg><use href="#i-dot-num" /></svg></button>
            <button type="button" aria-label="Primitive normals"><svg><use href="#i-prim" /></svg></button>
            <button type="button" aria-label="Primitive numbers"><svg><use href="#i-prim-num" /></svg></button>
            <button type="button" aria-label="Hulls"><svg><use href="#i-hull" /></svg></button>
            <svg class="scroll-down"><use href="#i-down" /></svg>
          </div>
        </div>
        <div class="splitter"><svg class="icon-6"><use href="#i-up" /></svg><span></span><svg class="icon-6"><use href="#i-down" /></svg></div>
      </section>

      <div class="gutter gutter-mid"></div>

      <section class="pane pane-right">
        <div class="params">
          <div class="pane-tabs">
            <button type="button" class="active italic">trail1 <i>×</i></button>
            <button type="button">Take List <i>×</i></button>
            <button type="button">Performance Monitor <i>×</i></button>
            <svg class="tab-add icon-10"><use href="#i-plus" /></svg>
            <span class="tab-tools">
              <svg class="icon-pane"><use href="#i-pane" /></svg>
              <svg class="icon-6"><use href="#i-down" /></svg>
            </span>
          </div>
          <div class="pathbar">
            <svg class="icon"><use href="#i-back" /></svg>
            <svg class="icon dim"><use href="#i-next" /></svg>
            <div class="crumbs">
              <a href="#obj"><svg class="icon"><use href="#i-obj" /></svg>obj</a>
              <a href="#geo1"><svg class="icon"><use href="#i-geo" /></svg>geo1</a>
              <span class="crumb-menu"><svg class="icon-6"><use href="#i-down" /></svg></span>
            </div>
            <svg class="icon"><use href="#i-pin" /></svg>
            <svg class="icon"><use href="#i-target" /></svg>
          </div>
          <div class="namebar">
            <svg class="icon-20"><use href="#i-trail" /></svg>
            <label for="node-name">Trail</label>
            <input id="node-name" type="text" value="trail1" />
            <svg class="icon"><use href="#i-gear" /></svg>
            <svg class="icon"><use href="#i-hda" /></svg>
            <svg class="icon"><use href="#i-search" /></svg>
            <svg class="icon"><use href="#i-info" /></svg>
            <svg class="icon"><use href="#i-help" /></svg>
          </div>
          <div class="param-body">
            <form class="param-form">
              <label for="result-type">Result Type</label>
              <div class="select select-param">
                <select id="result-type" class="bold"><option>Compute Velocity</option></select>
                <svg class="updown"><use href="#i-updown" /></svg>
              </div>
              <label for="trail-length" class="disabled">Trail Length</label>
              <div class="field">
                <input id="trail-length" type="text" value="2" disabled />
                <input type="range" aria-label="Trail Length" min="0" max="10" value="2" disabled />
              </div>
              <label for="trail-increment">Trail Increment</label>
              <div class="field">
                <input id="trail-increment" type="text" value="1" />
                <input type="range" aria-label="Trail Increment" min="0" max="10" value="1" style="--fill: 10%" />
              </div>
              <label for="cache-size">Cache Size</label>
              <div class="field">
                <input id="cache-size" type="text" value="2" />
                <input type="range" class="ticks" aria-label="Cache Size" min="1" max="20" value="2" style="--fill: 6%" />
              </div>
              <div class="field second"><button type="button" class="button">Reset Cache</button></div>
              <div class="field second">
                <input id="evaluate" type="checkbox" checked />
                <label for="evaluate" class="bold">Evaluate Within Frame Range</label>
              </div>
              <label for="connectivity" class="disabled">Connectivity</label>
              <div class="select select-param disabled">
                <select id="connectivity" disabled><option>Quadrilaterals</option></select>
                <svg class="updown"><use href="#i-updown" /></svg>
              </div>
              <div class="field second">
                <input id="close-rows" type="checkbox" checked disabled />
                <label for="close-rows" class="disabled">Close rows</label>
              </div>
              <div class="field second clipped-row"><input type="text" aria-label="Velocity scale" /><input type="range" class="bare" aria-label="Velocity scale slider" min="0" max="10" value="1" /></div>
            </form>
            <div class="scrollbar">
              <span class="thumb"></span>
              <svg class="icon-8 dim"><use href="#i-up" /></svg>
              <svg class="icon-8"><use href="#i-down" /></svg>
            </div>
          </div>
        </div>

        <div class="splitter"><svg class="icon-6"><use href="#i-up" /></svg><span></span><svg class="icon-6"><use href="#i-down" /></svg></div>

        <div class="network">
          <div class="pane-tabs">
            <button type="button" class="active italic">/obj/geo1 <i>×</i></button>
            <button type="button">Tree View <i>×</i></button>
            <button type="button">Material Palette <i>×</i></button>
            <button type="button">Asset Browser <i>×</i></button>
            <svg class="tab-add icon-10"><use href="#i-plus" /></svg>
            <span class="tab-tools">
              <svg class="icon-pane"><use href="#i-pane" /></svg>
              <svg class="icon-6"><use href="#i-down" /></svg>
            </span>
          </div>
          <div class="pathbar">
            <svg class="icon"><use href="#i-back" /></svg>
            <svg class="icon"><use href="#i-next" /></svg>
            <div class="crumbs">
              <a href="#obj"><svg class="icon"><use href="#i-obj" /></svg>obj</a>
              <a href="#geo1"><svg class="icon"><use href="#i-geo" /></svg>geo1</a>
              <span class="crumb-menu"><svg class="icon-6"><use href="#i-down" /></svg></span>
            </div>
            <svg class="icon"><use href="#i-pin" /></svg>
            <svg class="icon"><use href="#i-target" /></svg>
          </div>
          <div class="net-menu">
            <span class="handle"></span>
            <div class="menus">
              <button type="button">Add</button>
              <button type="button">Edit</button>
              <button type="button">Go</button>
              <button type="button">View</button>
              <button type="button">Tools</button>
              <button type="button">Layout</button>
              <button type="button">Help</button>
            </div>
            <div class="net-icons">
              <span>
                <svg class="icon"><use href="#i-tools" /></svg>
                <svg class="icon"><use href="#i-tree" /></svg>
                <svg class="icon"><use href="#i-list" /></svg>
              </span>
              <span>
                <svg class="icon"><use href="#i-palette" /></svg>
                <svg class="icon"><use href="#i-cells" /></svg>
              </span>
              <span>
                <svg class="icon"><use href="#i-netbox" /></svg>
                <svg class="icon"><use href="#i-note" /></svg>
                <svg class="icon"><use href="#i-image" /></svg>
                <svg class="icon"><use href="#i-gift" /></svg>
              </span>
              <span>
                <svg class="icon"><use href="#i-search" /></svg>
                <svg class="icon"><use href="#i-eye" /></svg>
              </span>
            </div>
          </div>
          <div class="net-canvas">
            <svg class="canvas">
              <g transform="translate(-636 -468)">
                <text class="context" x="1181" y="504">Geometry</text>
                <circle cx="1314" cy="614" r="18" fill="#8a5a96" />
                <g class="wires">
                  <path d="M1029 468L926 508q-10 3-12 13" />
                  <path d="M1113 468l100 57q15 8 16 20" stroke-dasharray="2 2" />
                  <path d="M1235 476q0 5-6 8t-6 7M1235 511q0 8-6 14l-9 11q-7 5-7 10M1221 566q-1 11-14 13l-109 13q-12 2-14 12M1221 566q2 11 14 13l65 12M1097 624q1 9 12 10 6 1 14 1 11 0 12 10" />
                </g>
                <circle cx="914" cy="530" r="25" fill="#4a6ba3" />
                <circle cx="914" cy="530" r="17" fill="#9272cb" />
                <path d="M894 523h40q2 0 2 2v11q0 2-2 2h-40q-2 0-2-2v-11q0-2 2-2z" fill="#d7d3d7" stroke="#1a1a1a" stroke-width="5" />
                <path d="M894 523h40q2 0 2 2v11q0 2-2 2h-40q-2 0-2-2v-11q0-2 2-2z" fill="#d7d3d7" stroke="#ecd23c" stroke-width="2.500" />
                <path d="M929 524h6v13h-6z" fill="#1ea8f0" /><path d="M924 524h5l-1 13h-5z" fill="#e6c8dc" />
                <path d="M899 524l-1 13M905 524l-1 13M924 524l-1 13" stroke="#777" /><path d="M910 535q2-8 9-10" stroke="#c98a55" stroke-width="2" fill="none" />
                <use href="#n-plate" class="node" x="1213" y="457" width="46" height="16" />
                <use href="#n-plate" class="node" x="1213" y="494" width="48" height="17" opacity=".6" />
                <use href="#n-plate" class="node" x="1212" y="492" width="46" height="16" />
                <use href="#n-plate" class="node" x="1198" y="548" width="46" height="16" />
                <use href="#n-box" class="node" x="1074" y="606" width="46" height="16" />
                <use href="#n-box" class="node-dop" x="1126" y="649" width="46" height="16" opacity=".6" />
                <use href="#n-box" class="node-dop" x="1125" y="648" width="46" height="16" />
                <path d="M1231 497l6 1-4 6z" fill="#aaa" stroke="#a66" stroke-width=".8" />
                <path d="M1217 552h9v8h-9z" fill="#d8722a" /><path d="M1219 554l5 4M1224 554l-5 4" stroke="#5a2a10" />
                <circle cx="1096" cy="611" r="4.500" fill="#b02a28" /><circle cx="1099" cy="615" r="2.500" fill="#e8c8a0" />
                <path d="M1150 651q-6 4-2 9" stroke="#8a9a8a" stroke-width="3" fill="none" />
                <g class="dots">
                  <circle cx="1235" cy="476" r="2" /><circle cx="1223" cy="490" r="2" /><circle cx="1231" cy="490" r="2" /><circle cx="1240" cy="490" r="2" /><circle cx="1248" cy="490" r="2" /><circle cx="1235" cy="511" r="2" />
                  <circle cx="1212" cy="546" r="2" /><circle cx="1229" cy="546" r="2" /><circle cx="1221" cy="566" r="2" />
                  <circle cx="1084" cy="604" r="2" /><circle cx="1092" cy="604" r="2" /><circle cx="1101" cy="604" r="2" /><circle cx="1109" cy="604" r="2" /><circle cx="1097" cy="624" r="2" />
                  <circle cx="1135" cy="645" r="2" /><circle cx="1143" cy="645" r="2" /><circle cx="1152" cy="645" r="2" /><circle cx="1160" cy="645" r="2" /><circle cx="1147" cy="666" r="2" />
                  <circle cx="914" cy="519" r="2" /><circle cx="914" cy="541" r="2" />
                </g>
                <g class="rings">
                  <circle cx="944" cy="540" r="2.500" /><circle cx="1267" cy="510" r="2.500" /><circle cx="1252" cy="566" r="2.500" /><circle cx="1136" cy="623" r="2.500" /><circle cx="1177" cy="665" r="2.500" />
                </g>
                <path d="M1125 622h5v4h-5zM1126 622v-2h3v2" fill="#5a5f66" stroke="#5a5f66" />
                <g class="node-names">
                  <text x="939" y="532">trail1</text>
                  <text x="1260" y="471">scatter1</text>
                  <text x="1261" y="503">attribvop1</text>
                  <text x="1247" y="558">attribinterpolate1</text>
                  <text x="1122" y="616">groupexpression1</text>
                  <text x="1121" y="636" class="group">group1</text>
                  <text x="1173" y="647" class="kind">DOP Network</text>
                  <text x="1173" y="658">popnet</text>
                </g>
                <path d="M1108 618v16l4-3 3 6 3-1-3-6h5z" fill="#fff" stroke="#111" stroke-width=".8" />
              </g>
            </svg>
          </div>
        </div>
      </section>
    </main>

    <footer class="playbar">
      <div class="gutter"></div>
      <div class="timeline">
        <div class="time-row">
          <div class="transport">
            <button type="button" aria-label="First frame"><svg viewBox="0 0 22 12"><path d="M2 1v10M10 1L4 6l6 5zM18 1l-6 5 6 5z" fill="#ddd" stroke="#ddd" /></svg></button>
            <button type="button" aria-label="Play reverse"><svg viewBox="0 0 22 12"><path d="M15 0v12L6 6z" fill="#ddd" /></svg></button>
            <button type="button" class="on" aria-label="Stop"><svg viewBox="0 0 22 12"><path d="M5 0h12v12H5z" fill="#e8e8e8" /></svg></button>
            <button type="button" aria-label="Play"><svg viewBox="0 0 22 12"><path d="M7 0v12l9-6z" fill="#ddd" /></svg></button>
            <button type="button" aria-label="Last frame"><svg viewBox="0 0 22 12"><path d="M20 1v10M12 1l6 5-6 5zM4 1l6 5-6 5z" fill="#ddd" stroke="#ddd" /></svg></button>
          </div>
          <input class="frame" type="text" aria-label="Current frame" value="61" />
          <div class="steps">
            <button type="button" aria-label="Previous frame"><svg viewBox="0 0 10 10"><path d="M5 1v8L1 5zM8 1v8" fill="#ccc" stroke="#ccc" /></svg></button>
            <button type="button" aria-label="Next frame"><svg viewBox="0 0 10 10"><path d="M5 1v8l4-4zM2 1v8" fill="#ccc" stroke="#ccc" /></svg></button>
          </div>
          <svg class="ruler" id="ruler"></svg>
        </div>
        <div class="time-row range-row">
          <div class="modes">
            <button type="button" aria-label="Select"><svg viewBox="0 0 22 22"><path d="M4 6h11v9H4z" fill="#ddd" /><path d="M9 8l3 12 2-3 4 3 1-2-3-3 3-2z" fill="#eee" stroke="#333" /></svg></button>
            <button type="button" aria-label="Audio"><svg viewBox="0 0 22 22"><path d="M7 4q-5 6 0 13M15 4q5 6 0 13M10 16V7l4-1v9" stroke="#ccc" stroke-width="1.500" fill="none" /></svg></button>
            <button type="button" aria-label="Loop"><svg viewBox="0 0 22 22"><path d="M4 15h14v-3q-2-6-9-5M10 4L5 8l6 3" stroke="#ccc" stroke-width="1.800" fill="none" /></svg></button>
            <button type="button" aria-label="Real time"><svg viewBox="0 0 22 22"><circle cx="11" cy="11" r="7" fill="none" stroke="#ddd" stroke-width="2" /><path d="M11 6v5h4" stroke="#ddd" stroke-width="1.500" fill="none" /></svg></button>
            <button type="button" class="dim" aria-label="Previous key"><svg viewBox="0 0 22 22"><path d="M8 6v9M15 6v9l-6-4z" fill="#666" stroke="#666" /></svg></button>
            <button type="button" class="dim" aria-label="Next key"><svg viewBox="0 0 22 22"><path d="M14 6v9M7 6v9l6-4z" fill="#666" stroke="#666" /></svg></button>
          </div>
          <input type="text" class="flat" aria-label="Global start" value="1" />
          <input type="text" aria-label="Range start" value="1" />
          <div class="range-bar"><svg class="icon-8"><use href="#i-right" /></svg><span></span><svg class="icon-8"><use href="#i-left" /></svg></div>
          <input type="text" aria-label="Range end" value="240" />
          <input type="text" class="flat" aria-label="Global end" value="240" />
        </div>
      </div>
      <div class="key-button">
        <button type="button" class="key" aria-label="Set key"><svg viewBox="0 0 22 22"><circle cx="14" cy="7" r="4" fill="none" stroke="#666" stroke-width="2.500" /><path d="M11 10l-7 8M4 15l3 3M7 12l3 3" stroke="#666" stroke-width="2.500" /></svg></button>
        <button type="button" class="key-menu" aria-label="Key options"><svg class="icon-8"><use href="#i-down" /></svg></button>
      </div>
      <div class="channels">
        <button type="button" class="square" aria-label="Auto key"><svg viewBox="0 0 20 20"><path d="M3 3h6v13H3z" fill="#ccc" /><path d="M3 5h5M3 9h5M3 13h5" stroke="#a33" /><path d="M8 10q0-5 5-4l2 2M16 9q0 6-6 4M14 5v4h4M10 16v-3H7" stroke="#eee" stroke-width="1.500" fill="none" /></svg></button>
        <button type="button" class="wide-button">0 keys, 0/0 channels <svg class="icon-8"><use href="#i-up" /></svg></button>
        <button type="button" class="square dark" aria-label="Channel graph"><svg viewBox="0 0 20 20"><path d="M3 10h14" stroke="#ddd" stroke-width="1.500" /><path d="M3 11q3-8 6 0t6-2l2 2" stroke="#d0a030" fill="none" /><path d="M3 12q4 5 7-2t7 1" stroke="#5a8ad0" fill="none" /></svg></button>
        <div class="select">
          <select aria-label="Key mode"><option>Key All Channels</option></select>
          <svg class="updown"><use href="#i-updown" /></svg>
        </div>
      </div>
    </footer>

    <div class="stamp">
      <svg class="stamp-logo" viewBox="0 0 40 34"><path d="M28 4H8v26h24V16" fill="none" stroke="#ee8b22" stroke-width="3" /><path d="M0 26L38 6 26 30l-3-10-10 9 7-12-17 12z" fill="#f39a2e" /></svg>
      <span class="stamp-name">直线网</span>
      <span class="stamp-reg">®</span>
      <span class="stamp-url">linecg.com</span>
      <svg class="stamp-dots"><path d="M0 2h80" stroke="#555" stroke-width="4" stroke-dasharray="4 3 3 2" /></svg>
    </div>
    <script src="app.js"></script>
  </body>
</html>
```

FILE: styles.css
```css
* {
  box-sizing: border-box;
}
body {
  margin: 0;
  height: 100vh;
  display: flex;
  flex-direction: column;
  overflow: hidden;
  position: relative;
  background: #3a3a3a;
  color: #c8c8c8;
  font-family: "Noto Sans CJK SC", "Noto Sans", sans-serif;
  font-size: 10px;
  line-height: 16px;
}
button, select, input {
  font: inherit;
  color: inherit;
  border: 0;
  border-radius: 0;
  padding: 0;
  margin: 0;
  background: none;
}
select {
  appearance: none;
  outline: none;
}
a {
  color: inherit;
  text-decoration: none;
}
svg {
  display: block;
  flex: none;
}
b, .bold {
  font-weight: bold;
}
.sprite {
  position: absolute;
  width: 0;
  height: 0;
  visibility: hidden;
}
.icon {
  width: 18px;
  height: 18px;
}
.icon-20 {
  width: 20px;
  height: 20px;
}
.icon-16 {
  width: 16px;
  height: 16px;
}
.icon-14 {
  width: 14px;
  height: 14px;
}
.icon-10 {
  width: 10px;
  height: 10px;
}
.icon-8 {
  width: 8px;
  height: 8px;
}
.icon-6 {
  width: 6px;
  height: 6px;
}
.icon-pane {
  width: 10px;
  height: 8px;
}
.updown {
  width: 8px;
  height: 14px;
  color: #8b8b8b;
}
.dim {
  color: #5e5e5e;
}
.disabled {
  color: #747474;
}

/* title bar */
.titlebar {
  flex: none;
  height: 28px;
  display: flex;
  align-items: center;
  gap: 5px;
  border-top: 1px solid #000;
  border-bottom: 2px solid #d9c2b5;
  background: linear-gradient(90deg, #f6dcc8 0, #f0cdb4 16%, #dcb096 26%, #dfae90 38%, #cf9f88 50%, #d0a48e 62%, #cfa58c 80%, #e0b392 100%);
  color: #1c1512;
  font-family: "Open Sans", "Noto Sans", sans-serif;
  font-size: 12px;
}
.app-logo {
  width: 16px;
  height: 16px;
}
.window-buttons {
  margin-left: auto;
  align-self: flex-start;
  display: flex;
  border: 1px solid #6d5a55;
  border-top: 0;
  border-right: 0;
  border-radius: 0 0 0 5px;
  overflow: hidden;
}
.window-buttons button {
  width: 27px;
  height: 17px;
  display: flex;
  align-items: center;
  justify-content: center;
  border-right: 1px solid #8f6f66;
  background: linear-gradient(#ecd6cc, #c6a194 50%, #d4b3a5);
}
.window-buttons svg {
  width: 11px;
  height: 11px;
}
.window-buttons .close {
  width: 42px;
  border-right: 0;
  background: linear-gradient(#e39a88, #c8391f 50%, #d4553a);
}

/* menu bar */
.menubar {
  flex: none;
  height: 25px;
  display: flex;
  align-items: center;
  padding: 0 3px;
  background: linear-gradient(#414141, #333);
  border-bottom: 1px solid #151515;
}
.handle {
  flex: none;
  width: 8px;
  align-self: stretch;
  border-right: 1px solid #111;
  background: linear-gradient(#5a5a5a, #303030);
  position: relative;
}
.handle::after {
  content: "";
  position: absolute;
  top: 2px;
  left: 1px;
  border: 3px solid transparent;
  border-top: 0;
  border-bottom: 5px solid #050505;
}
.menus {
  display: flex;
  gap: 10px;
  padding-left: 6px;
  font-size: 11px;
  color: #bdbdbd;
}
.desk {
  display: flex;
  align-items: center;
  height: 22px;
  margin-left: 5px;
  padding-left: 5px;
  gap: 4px;
  background: linear-gradient(90deg, #4b4b4b 100px, #343434 100px);
  font-size: 11px;
  color: #bdbdbd;
}
.menus + .desk {
  margin-left: 24px;
}
.desk select {
  width: 81px;
}
.desk .updown {
  margin: 0 6px 0 0;
}
.desk-take {
  margin-left: auto;
  background: linear-gradient(90deg, #4b4b4b 141px, #343434 141px);
}
.desk-take select {
  width: 121px;
}
.help-button {
  width: 22px;
  height: 22px;
  margin-left: 6px;
  padding: 2px;
  background: #8b8b8b;
}

/* shelves */
.shelves {
  flex: none;
  height: 56px;
  display: flex;
  padding-left: 3px;
  background: #2c2c2c;
  border-bottom: 1px solid #151515;
}
.shelf {
  min-width: 0;
  display: flex;
  flex-direction: column;
}
.shelf-left {
  flex: 593 1 0;
}
.shelf-right {
  flex: 686 1 0;
}
.shelf-divider {
  flex: none;
  width: 9px;
  margin: 0 1px;
  background: linear-gradient(90deg, #3c3c3c, #525252, #3a3a3a);
}
.shelf-divider::after {
  content: "";
  display: block;
  width: 6px;
  height: 15px;
  margin: 21px auto 0;
  background: radial-gradient(#101010 1px, transparent 1px) 0 0 / 3px 3px;
}
.shelf-tabs {
  height: 18px;
  display: flex;
  font-size: 9px;
  line-height: 18px;
  background: #2b2b2b;
}
.shelf-tabs button {
  flex: 1 1 auto;
  padding: 0 4px;
  border-right: 1px solid #101010;
  border-bottom: 1px solid #151515;
  background: linear-gradient(#383838, #2c2c2c);
  color: #b5b5b5;
}
.shelf-tabs .active {
  background: #464646;
  border-bottom-color: #464646;
}
.shelf-end {
  width: 50px;
  padding-left: 18px;
  display: flex;
  align-items: center;
  justify-content: space-between;
  padding-right: 4px;
  color: #d8d8d8;
  background: repeating-linear-gradient(90deg, #151515 0 1px, #2d2d2d 1px 3px) 0 0 / 12px 100% no-repeat;
}
.tools {
  flex: 1;
  display: flex;
  position: relative;
  overflow: hidden;
  padding-left: 15px;
  background: linear-gradient(#484848, #363636);
}
.tools button {
  flex: none;
  min-width: 40px;
  padding: 2px 2px 0;
  display: flex;
  flex-direction: column;
  align-items: center;
}
.shelf-right .tools button {
  padding: 2px 3px 0;
}
.tools span {
  height: 17px;
  display: flex;
  align-items: center;
  font-size: 9px;
  line-height: 9px;
  color: #b9b9b9;
  white-space: nowrap;
}
.tools .wide {
  width: 62px;
}
.tools .clipped {
  min-width: 28px;
}
.more {
  position: absolute;
  right: 3px;
  top: 15px;
  color: #8b8b8b;
}

/* panes */
.workspace {
  flex: 1;
  min-height: 0;
  display: flex;
}
.gutter {
  flex: none;
  width: 8px;
  border-left: 2px solid #0d0d0d;
  border-right: 1px solid #1c1c1c;
  background: #4a4a4a;
}
.gutter-mid {
  width: 5px;
  margin-right: 1px;
  border-left-width: 1px;
}
.pane {
  min-width: 0;
  display: flex;
  flex-direction: column;
}
.pane-left {
  flex: 622 1 0;
}
.pane-right {
  flex: 664 1 0;
}
.pane-tabs {
  flex: none;
  height: 19px;
  display: flex;
  align-items: center;
  background: #2e2e2e;
}
.pane-tabs button {
  height: 19px;
  display: flex;
  align-items: center;
  gap: 9px;
  padding: 0 5px 0 6px;
  border-right: 1px solid #191919;
  background: #2f2f2f;
  color: #b9b9b9;
  white-space: nowrap;
}
.pane-tabs .active {
  background: #444;
}
.pane-tabs .italic {
  font-style: italic;
}
.pane-right .pane-tabs button {
  gap: 13px;
}
.pane-tabs i {
  font-style: normal;
  font-size: 8px;
  font-weight: bold;
  width: 4px;
}
.tab-add {
  margin-left: 6px;
}
.tab-tools {
  margin-left: auto;
  padding-right: 5px;
  display: flex;
  align-items: center;
  gap: 12px;
  color: #d8d8d8;
}
.pathbar {
  flex: none;
  height: 32px;
  display: flex;
  align-items: center;
  gap: 4px;
  padding: 0 3px;
  background: linear-gradient(#454545, #393939);
  border-bottom: 1px solid #161616;
}
.crumbs {
  flex: 1;
  height: 23px;
  display: flex;
  align-items: center;
  margin: 0 5px;
  border: 1px solid #111;
  background: #3f3f3f;
  font-size: 11px;
}
.crumbs a {
  height: 21px;
  display: flex;
  align-items: center;
  gap: 3px;
  padding-left: 4px;
  color: #c4c4c4;
}
.crumbs a:first-child::after {
  content: "";
  width: 15px;
  height: 15px;
  margin: 0 2px 0 -8px;
  border: 1px solid #151515;
  border-left: 0;
  border-bottom: 0;
  transform: rotate(45deg) skew(20deg, 20deg);
}
.crumb-menu {
  margin-left: auto;
  width: 18px;
  height: 21px;
  display: flex;
  align-items: center;
  justify-content: center;
  background: #333;
  color: #8b8b8b;
}
.path-extra {
  display: flex;
  gap: 5px;
  margin-left: 11px;
}

/* operator toolbar */
.opbar {
  flex: none;
  height: 31px;
  display: flex;
  align-items: center;
  padding-right: 4px;
  background: #2f2f2f;
  border-bottom: 2px solid #141414;
  border-top: 2px solid #3f3f3f;
}
.opbar > .icon-20 {
  margin: 0 2px 0 5px;
}
.opbar label {
  width: 43px;
  margin-left: 13px;
  white-space: nowrap;
}
.opbar .disabled {
  color: #5a5a5a;
}
.opbar b {
  width: 24px;
}
.opbar .select {
  margin-left: 13px;
}
.op-input {
  width: 48px;
  height: 21px;
  margin-left: 10px;
  padding-left: 5px;
  background: #2b2b2b;
  color: #4c4c4c;
}
.opbar .button {
  margin-left: 13px;
}
.opbar > .icon {
  margin-left: 5px;
}
.button {
  width: 91px;
  height: 20px;
  border: 1px solid #1d1d1d;
  background: linear-gradient(#5a5a5a, #434343);
  color: #c0c0c0;
}
.select {
  height: 20px;
  display: flex;
  align-items: center;
  justify-content: space-between;
  padding-right: 5px;
  border: 1px solid #1d1d1d;
  background: linear-gradient(90deg, transparent calc(100% - 20px), #3a3a3a calc(100% - 20px)), linear-gradient(#575757, #424242);
}
.select select {
  flex: 1;
  min-width: 0;
  padding-left: 12px;
  white-space: nowrap;
}
.select-op {
  width: 78px;
}
.select-param {
  width: 145px;
}

/* scene view */
.scene {
  flex: 1;
  min-height: 0;
  display: flex;
}
.toolbar {
  flex: none;
  display: flex;
  flex-direction: column;
  align-items: center;
  overflow: hidden;
  background: #3b3b3b;
}
.toolbar-left {
  width: 33px;
}
.toolbar-right {
  width: 26px;
  border-right: 2px solid #161616;
}
.toolbar-handle {
  flex: none;
  width: 100%;
  height: 9px;
  padding: 1px 2px;
  display: flex;
  border-bottom: 1px solid #111;
  background: linear-gradient(#5c5c5c, #3a3a3a);
  color: #080808;
}
.toolbar button {
  flex: none;
  position: relative;
  width: 26px;
  height: 27px;
  display: flex;
  align-items: center;
  justify-content: center;
}
.toolbar button svg {
  width: 22px;
  height: 22px;
}
.toolbar .menu::after {
  content: "";
  position: absolute;
  right: 0;
  bottom: 1px;
  border: 3px solid transparent;
  border-right: 0;
  border-left: 4px solid #8b8b8b;
}
.toolbar .on {
  border: 1px solid #8b98a1;
  background: linear-gradient(#51626f, #7d8a94);
}
.toolbar .on.menu::after {
  border-left-color: #222;
}
.tool-group {
  margin: 6px 0 26px;
  border: 1px solid #151515;
  background: #575757;
}
.tool-group button {
  width: 23px;
  height: 23px;
}
.snap-group {
  padding-top: 9px;
  display: flex;
  flex-direction: column;
  align-items: center;
}
.snap-group .half {
  height: 14px;
}
.snap-group .half svg {
  height: 12px;
}
.toolbar .low {
  height: 25px;
}
.scroll-down {
  width: 8px;
  height: 8px;
  margin: 4px 0 3px;
  color: #8b8b8b;
}
.toolbar-right .toolbar-handle {
  justify-content: flex-end;
  margin-bottom: 20px;
}
.toolbar-right button {
  width: 22px;
  height: 24px;
}
.toolbar-right button svg {
  width: 20px;
  height: 20px;
}
.toolbar-right .scroll-down {
  margin: 0;
}
.viewport {
  flex: 1;
  min-width: 0;
  position: relative;
  overflow: hidden;
  background: linear-gradient(#65808d 0, #6f8792 12%, #788a95 24%, #7f929c 36%, #94a7b0 58%, #abb9c0 76%, #c0c7ca 100%);
}
.canvas {
  width: 100%;
  height: 100%;
}
.floor-label {
  font-size: 14px;
  font-style: italic;
  fill: #71828c;
}
.axis {
  font-family: "Liberation Sans", sans-serif;
  font-size: 11px;
}
.mesh {
  fill: #a5a3a4;
  stroke: #7a7a7c;
}
.edges {
  fill: none;
  stroke: #68686a;
  stroke-opacity: .6;
}
.shade {
  fill: none;
  stroke: #3f4246;
  stroke-width: 2;
  stroke-dasharray: 2 1;
  stroke-opacity: .7;
}
.soft {
  stroke-dasharray: 1 2;
  stroke-opacity: .4;
}
.view-menus {
  position: absolute;
  top: 3px;
  right: 6px;
  display: flex;
  gap: 6px;
}
.view-menus button {
  height: 19px;
  display: flex;
  align-items: center;
  gap: 4px;
  padding: 0 6px;
  border: 1px solid #a5b1ba;
  border-radius: 10px;
  background: #586b77;
  color: #e0e4e6;
}
.view-menus .round {
  width: 18px;
  height: 18px;
  margin-top: 1px;
  padding: 0;
}
.splitter {
  flex: none;
  height: 7px;
  display: flex;
  align-items: center;
  justify-content: center;
  gap: 17px;
  border-top: 1px solid #6a6a6a;
  border-bottom: 1px solid #111;
  background: #454545;
  color: #8b8b8b;
}
.splitter svg {
  height: 4px;
}
.splitter span {
  width: 21px;
  height: 5px;
  background: radial-gradient(#8b8b8b 1px, transparent 1px) 0 0 / 3px 3px;
}

/* parameters */
.params {
  flex: none;
  height: 276px;
  display: flex;
  flex-direction: column;
}
.namebar {
  flex: none;
  height: 27px;
  display: flex;
  align-items: center;
  gap: 5px;
  padding: 0 3px;
  background: #3a3a3a;
  border-bottom: 2px solid #191919;
  border-top: 1px solid #191919;
}
.namebar label {
  width: 28px;
  margin-left: -2px;
  font-weight: bold;
}
.namebar input {
  flex: 1;
  min-width: 0;
  height: 22px;
  margin-left: -5px;
  padding-left: 3px;
  background: #131313;
  color: #d0d0d0;
  font-family: "DejaVu Sans Mono", monospace;
  font-size: 11px;
}
.param-body {
  flex: 1;
  min-height: 0;
  display: flex;
  background: #3b3b3b;
}
.param-form {
  flex: 1;
  min-width: 0;
  display: grid;
  grid-template-columns: 120px 1fr;
  grid-auto-rows: 24px;
  align-items: center;
  column-gap: 15px;
  padding: 2px 3px 0 0;
  overflow: hidden;
}
.param-form > label {
  text-align: right;
}
.field {
  display: flex;
  align-items: center;
}
.second {
  grid-column: 2;
}
.field input[type="text"] {
  width: 92px;
  height: 20px;
  padding-left: 2px;
  border: 1px solid #1d1d1d;
  background: #131313;
  font-family: "DejaVu Sans Mono", monospace;
  font-size: 11px;
}
.field input[type="text"]:disabled {
  border-color: #353535;
  background: #363636;
  color: #565656;
}
.field input[type="checkbox"] {
  appearance: none;
  width: 13px;
  height: 13px;
  margin-right: 5px;
  background: #151515;
  position: relative;
}
.field input[type="checkbox"]::after {
  content: "";
  position: absolute;
  left: 4px;
  top: 0;
  width: 5px;
  height: 10px;
  border: solid #e8e8e8;
  border-width: 0 2px 2px 0;
  transform: rotate(40deg);
}
.field input[type="checkbox"]:disabled {
  background: #333;
}
.field input[type="checkbox"]:disabled::after {
  border-color: #888;
}
.field input[type="range"] {
  appearance: none;
  flex: 1;
  min-width: 0;
  height: 20px;
  margin-left: 4px;
  position: relative;
  background: linear-gradient(#1f5596, #1f5596) 0 8px / var(--fill) 4px no-repeat, linear-gradient(#0a0a0a, #0a0a0a) 0 8px / 100% 4px no-repeat;
}
.field .ticks::after {
  content: "";
  position: absolute;
  left: 2px;
  right: 2px;
  top: 14px;
  height: 2px;
  background: repeating-linear-gradient(90deg, #7b7b7b 0 1px, transparent 1px calc(100% / 19));
}
.field input[type="range"]::-webkit-slider-thumb {
  appearance: none;
  width: 5px;
  height: 19px;
  border: 1px solid #c8c8c8;
  background: #8f8f8f;
}
.field input[type="range"]:disabled {
  background: linear-gradient(#333, #333) 0 9px / 100% 2px no-repeat;
}
.field input[type="range"]:disabled::-webkit-slider-thumb {
  border-color: #555;
  background: #505050;
}
.field .bare {
  background: none;
}
.select.disabled {
  background: #363636;
  border-color: #333;
}
.select.disabled select {
  opacity: 1;
  color: #747474;
}
.select.disabled .updown {
  color: #555;
}
.clipped-row {
  align-self: start;
}
.scrollbar {
  flex: none;
  width: 14px;
  display: flex;
  flex-direction: column;
  align-items: center;
  gap: 10px;
  padding: 0 1px 6px;
  background: #282828;
  color: #8b8b8b;
}
.thumb {
  width: 12px;
  height: 91px;
  margin-bottom: auto;
  padding: 39px 2px;
  background: linear-gradient(90deg, #474747, #555);
}
.thumb::after {
  content: "";
  display: block;
  height: 12px;
  background: radial-gradient(#101010 1px, transparent 1px) 0 0 / 3px 3px;
}

/* network editor */
.network {
  flex: 1;
  min-height: 0;
  display: flex;
  flex-direction: column;
}
.net-menu {
  flex: none;
  height: 25px;
  display: flex;
  align-items: center;
  background: linear-gradient(#434343, #343434);
  border-top: 1px solid #4b4b4b;
  border-bottom: 1px solid #111;
}
.net-menu .menus {
  gap: 15px;
  padding-left: 9px;
}
.net-icons {
  margin-left: auto;
  display: flex;
  gap: 20px;
}
.net-icons span {
  display: flex;
  gap: 5px;
}
.net-icons span:last-child {
  padding-right: 1px;
}
.net-canvas {
  flex: 1;
  min-height: 0;
  background: #303030;
}
.wires path {
  fill: none;
  stroke: #4f7ab5;
  stroke-width: 1.3;
}
.wires path:first-child {
  stroke: #97966a;
}
.context {
  font-size: 23px;
  font-weight: bold;
  fill: #4b4b4b;
}
.node {
  color: #d6d4d5;
}
.node-dop {
  color: #a6e08e;
}
.dots {
  fill: #c4c4c4;
}
.rings {
  fill: #0d180a;
  stroke: #8fb56c;
  stroke-width: 1.3;
}
.node-names {
  font-size: 9px;
  fill: #b5b5b5;
}
.node-names .group {
  fill: #5b86c4;
}
.node-names .kind {
  font-size: 8px;
  fill: #666;
}

/* playbar */
.playbar {
  flex: none;
  height: 60px;
  display: flex;
  overflow: hidden;
  border-top: 1px solid #6b6b6b;
  background: #303030;
  color: #d0d0d0;
}
.timeline {
  flex: 1;
  min-width: 0;
  padding: 0 4px 0 8px;
}
.time-row {
  height: 41px;
  display: flex;
}
.transport, .steps {
  display: flex;
  height: 27px;
  margin-top: 7px;
}
.transport button, .modes button {
  width: 26px;
  border: 1px solid #181818;
  background: linear-gradient(#555, #3a3a3a);
  display: flex;
  align-items: center;
  justify-content: center;
}
.transport svg {
  width: 22px;
  height: 12px;
}
.transport .on {
  background: #5f7a8a;
}
.time-row input {
  padding-left: 2px;
  border: 1px solid #1c1c1c;
  background: #111;
  font-family: "DejaVu Sans Mono", monospace;
  font-size: 11px;
}
.time-row .frame {
  width: 44px;
  height: 27px;
  margin: 7px 3px 0;
}
.steps button {
  width: 13px;
  border: 1px solid #181818;
  background: linear-gradient(#505050, #3a3a3a);
}
.steps svg {
  width: 10px;
  height: 10px;
}
.ruler {
  flex: 1;
  min-width: 0;
  height: 41px;
  margin-left: 6px;
}
.ruler .ticks line {
  stroke: #a5a5a5;
}
.ruler text {
  font-size: 10px;
  fill: #8b8b8b;
}
.ruler .now {
  font-size: 12px;
  fill: #f0f0f0;
}
.range-row {
  height: 24px;
}
.modes {
  display: flex;
  width: 212px;
}
.modes svg {
  width: 22px;
  height: 22px;
}
.modes .dim {
  width: 24px;
  background: #2c2c2c;
}
.range-row input {
  width: 40px;
  height: 24px;
  margin-right: 4px;
}
.range-row .flat {
  background: #2a2a2a;
}
.range-row input:last-child {
  margin-right: 0;
}
.range-bar {
  flex: 1;
  display: flex;
  align-items: center;
  margin-right: 4px;
  color: #a5a5a5;
}
.range-bar span {
  flex: 1;
  height: 3px;
  background: #6b6b6b;
}
.key-button {
  display: flex;
  align-items: center;
}
.key {
  width: 38px;
  height: 38px;
  padding: 8px;
  border: 1px solid #262626;
  border-radius: 50%;
  background: #383838;
}
.key svg {
  width: 20px;
  height: 20px;
}
.key-menu {
  width: 14px;
  height: 20px;
  padding: 3px;
  background: #3f3f3f;
  color: #8b8b8b;
}
.channels {
  flex: none;
  width: 183px;
  display: grid;
  grid-template-columns: 22px 1fr;
  grid-auto-rows: 22px;
  gap: 5px 6px;
  padding: 8px 3px 0 7px;
}
.square {
  border: 1px solid #111;
  background: #4b4b4b;
}
.square svg {
  width: 20px;
  height: 20px;
}
.dark {
  background: #151515;
}
.wide-button {
  display: flex;
  align-items: center;
  justify-content: space-between;
  padding: 0 4px 0 14px;
  border: 1px solid #1d1d1d;
  background: linear-gradient(#555, #434343);
}
.wide-button svg {
  color: #8b8b8b;
}
.channels .select {
  height: 22px;
}
.channels select {
  padding-left: 8px;
}

/* corner stamp over the transport controls */
.stamp {
  position: absolute;
  left: 0;
  bottom: 0;
  width: 136px;
  height: 47px;
  border-radius: 8px;
  background: rgba(210, 210, 210, .5);
  color: #333;
}
.stamp-logo {
  position: absolute;
  left: 5px;
  top: 5px;
  width: 40px;
  height: 34px;
}
.stamp-name {
  position: absolute;
  left: 45px;
  top: 8px;
  font-size: 14px;
  line-height: 20px;
  font-weight: bold;
  font-style: italic;
}
.stamp-reg {
  position: absolute;
  left: 90px;
  top: 4px;
  font-size: 8px;
}
.stamp-url {
  position: absolute;
  left: 89px;
  top: 17px;
  font-family: "Liberation Sans", sans-serif;
  font-size: 6px;
  line-height: 12px;
  font-weight: bold;
}
.stamp-dots {
  position: absolute;
  left: 45px;
  top: 33px;
  width: 80px;
  height: 4px;
}
```

FILE: app.js
```js
const SVG = "http://www.w3.org/2000/svg";

function add(parent, name, attrs, text) {
  const el = document.createElementNS(SVG, name);
  for (const key in attrs) {
    el.setAttribute(key, attrs[key]);
  }
  if (text !== undefined) {
    el.textContent = text;
  }
  parent.appendChild(el);
  return el;
}

// floor grid: project the plane cell (u, v) into the camera view
function project(u, v) {
  const x = u / 5;
  const y = v / 2;
  const w = 1 - 0.19729 * x + 0.27047 * y;
  return {
    x: (409.78 * x + 140.52 * y + 70) / w,
    y: (-51.36 * x + 66.81 * y + 577.7) / w,
  };
}

function drawFloor() {
  const floor = document.getElementById("floor");
  const line = (a, b, bold) =>
    add(floor, "line", { x1: a.x, y1: a.y, x2: b.x, y2: b.y, "stroke-width": bold ? 2 : 1 });

  for (let u = -22; u <= 23; u++) {
    line(project(u, -4), project(u, 44), (u + 22) % 5 === 0);
  }
  for (let v = -4; v <= 44; v++) {
    line(project(-60, v), project(14, v), (v + 1) % 5 === 0);
  }
}

function drawRuler() {
  const ruler = document.getElementById("ruler");
  const frameX = (frame) => (frame - 1) * 3.466;
  const now = 61;

  add(ruler, "rect", { x: 0, y: 13, width: frameX(now), height: 9, fill: "#c96f14" });
  const ticks = add(ruler, "g", { class: "ticks" });
  add(ticks, "line", { x1: 0, y1: 22.5, x2: 830, y2: 22.5 });
  for (let frame = 6; frame <= 240; frame += 6) {
    const x = Math.round(frameX(frame)) + 0.5;
    const major = frame % 24 === 0;
    add(ticks, "line", { x1: x, x2: x, y1: major ? 15 : 18, y2: major ? 29 : 26 });
    if (major) {
      add(ruler, "text", { x: x, y: 10 }, frame);
    }
  }
  add(ruler, "text", { x: 2, y: 10 }, 1);

  const x = Math.round(frameX(now));
  add(ruler, "path", {
    d: `M${x - 11} 2.500h22v17h-8l-3 4-3-4h-8z`,
    fill: "#0b0b0b",
    stroke: "#e8e8e8",
  });
  add(ruler, "text", { x: x, y: 16, class: "now", "text-anchor": "middle" }, now);
}

drawFloor();
drawRuler();
```
